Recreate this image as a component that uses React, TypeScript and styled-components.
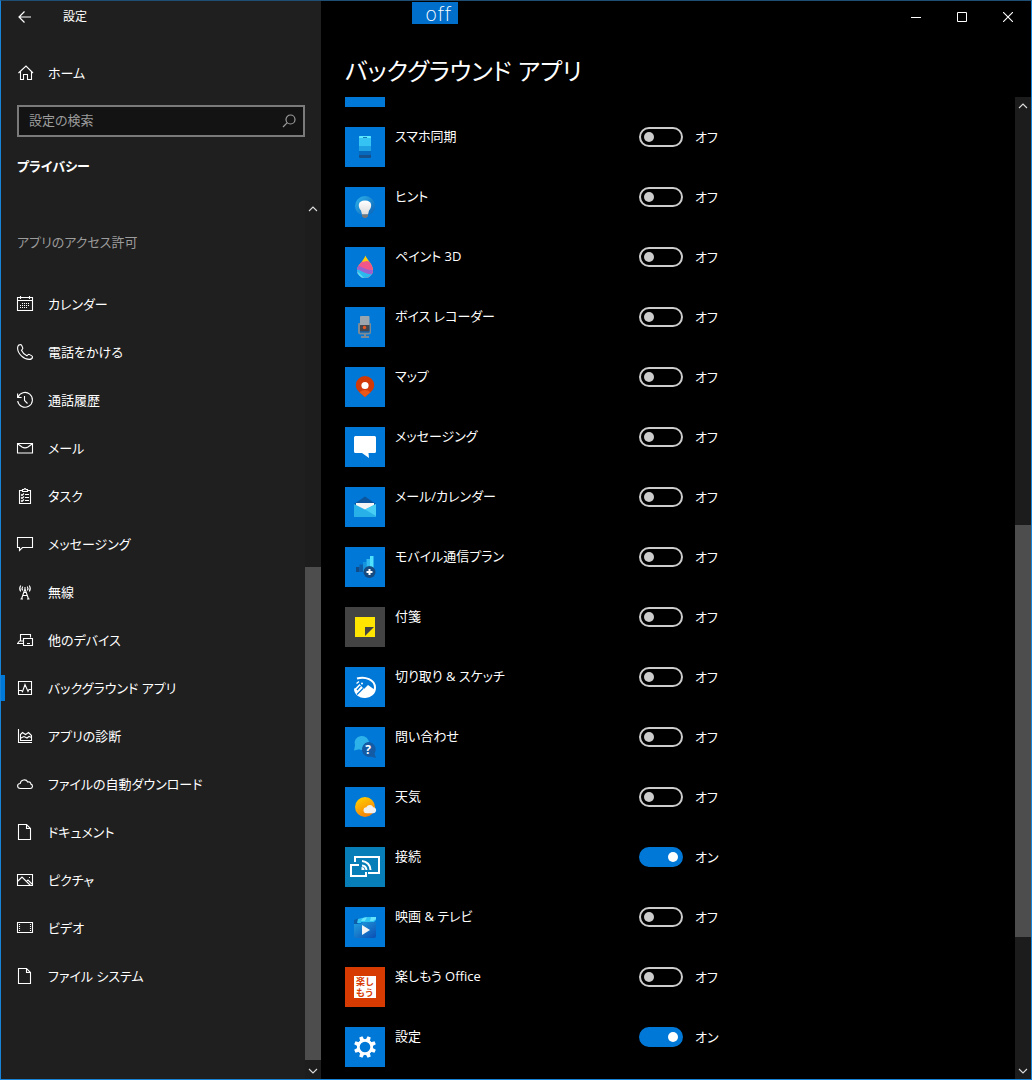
import React, { useState } from "react";
import styled, { createGlobalStyle } from "styled-components";

const GlobalStyle = createGlobalStyle`
  *, *::before, *::after { box-sizing: border-box; }
  html, body { margin: 0; background: #000; }
  body {
    color: #fff;
    font-family: "Open Sans", "Noto Sans CJK JP", sans-serif;
    font-size: 13px;
    line-height: 20px;
    font-feature-settings: "palt";
  }
  button, input { font: inherit; font-feature-settings: inherit; color: inherit; }
`;

/* ---------- window frame ---------- */

const Window = styled.div`
  position: relative;
  display: grid;
  grid-template-columns: 320px minmax(0, 1fr);
  height: 100vh;
  border: 1px solid #1883d7;
  border-top-color: #1f4e75;
  background: #000;
  overflow: hidden;
`;

const Badge = styled.output`
  position: absolute;
  top: 1px;
  left: 411px;
  width: 46px;
  height: 22px;
  padding-left: 13px;
  background: #006fcb;
  font-family: "DejaVu Sans", sans-serif;
  font-size: 20px;
  font-weight: 200;
  font-variant-ligatures: none;
  line-height: 24px;
`;

const Sidebar = styled.aside`
  display: flex;
  flex-direction: column;
  min-height: 0;
  background: #1f1f1f;
`;

const Main = styled.main`
  display: flex;
  flex-direction: column;
  min-width: 0;
  min-height: 0;
`;

const IconButton = styled.button<{ $width: number; $height: number }>`
  display: flex;
  align-items: center;
  justify-content: center;
  flex: none;
  width: ${(p) => p.$width}px;
  height: ${(p) => p.$height}px;
  padding: 0;
  border: 0;
  background: transparent;
`;

const TitleBar = styled.header`
  display: flex;
  align-items: center;
  height: 32px;
`;

const Caption = styled.span`
  padding-left: 14px;
  font-size: 12px;
`;

const WindowControls = styled.div`
  display: flex;
  justify-content: flex-end;
  height: 32px;
`;

/* ---------- sidebar ---------- */

const SideLink = styled.a<{ $current?: boolean }>`
  display: flex;
  align-items: center;
  gap: 15px;
  height: 48px;
  padding-left: 12px;
  border-left: 4px solid transparent;
  border-image: ${(p) =>
    p.$current ? "linear-gradient(transparent 25%, #0078d7 25%, #0078d7 75%, transparent 75%) 1" : "none"};
  border-width: 0 0 0 4px;
  color: #fff;
  text-decoration: none;
`;

const HomeArea = styled.div`
  padding-top: 16px;
`;

const SearchBox = styled.form`
  display: flex;
  align-items: center;
  height: 32px;
  margin: 8px 16px 0;
  border: 2px solid #7a7a7a;
  background: #131313;
  color: #9c9c9c;
`;

const SearchInput = styled.input`
  flex: 1;
  min-width: 0;
  height: 28px;
  padding: 0 0 2px 10px;
  border: 0;
  outline: 0;
  background: transparent;
  &::placeholder { color: #9c9c9c; opacity: 1; }
`;

const Section = styled.h2`
  margin: 19px 16px 24px;
  font-size: 13px;
  font-weight: 700;
  line-height: 20px;
`;

const SideScroll = styled.div`
  display: flex;
  flex: 1;
  min-height: 0;
`;

const NavArea = styled.nav`
  flex: 1;
  min-width: 0;
  overflow: hidden;
`;

const GroupTitle = styled.h3`
  margin: 32px 16px 28px;
  color: #9c9c9c;
  font-size: 13px;
  font-weight: 400;
  line-height: 20px;
`;

/* ---------- scroll bars ---------- */

const Bar = styled.div<{ $track: string }>`
  display: flex;
  flex-direction: column;
  flex: none;
  width: 16px;
  background: ${(p) => p.$track};
`;

const BarPart = styled.div<{ $grow: number; $thumb?: boolean }>`
  flex: ${(p) => p.$grow} 1 0;
  background: ${(p) => (p.$thumb ? "#4d4d4d" : "transparent")};
`;

function ScrollBar({ before, thumb, after, track }: { before: number; thumb: number; after: number; track: string }) {
  return (
    <Bar $track={track}>
      <IconButton type="button" $width={16} $height={17} aria-label="上へスクロール">
        <svg width="10" height="6" fill="none" stroke="#ddd" strokeWidth="1.1"><path d="M1 5 5 1 9 5" /></svg>
      </IconButton>
      <BarPart $grow={before} />
      <BarPart $grow={thumb} $thumb />
      <BarPart $grow={after} />
      <IconButton type="button" $width={16} $height={17} aria-label="下へスクロール">
        <svg width="10" height="6" fill="none" stroke="#ddd" strokeWidth="1.1"><path d="M1 1 5 5 9 1" /></svg>
      </IconButton>
    </Bar>
  );
}

/* ---------- content ---------- */

const Title = styled.h1`
  margin: 20px 24px 8px;
  font-size: 24px;
  font-weight: 400;
  line-height: 36px;
`;

const ContentScroll = styled.div`
  display: flex;
  flex: 1;
  min-height: 0;
`;

const AppList = styled.ul`
  display: flex;
  flex-direction: column;
  flex: 1;
  gap: 20px;
  min-width: 0;
  margin: 0;
  padding: 0 24px;
  overflow: hidden;
  list-style: none;
`;

const AppRow = styled.li`
  display: grid;
  grid-template-columns: 40px minmax(0, 234px) auto;
  flex: none;
  align-items: start;
  gap: 10px;
`;

const Tile = styled.div<{ $color?: string; $height?: number }>`
  display: flex;
  align-items: center;
  justify-content: center;
  height: ${(p) => p.$height ?? 40}px;
  background: ${(p) => p.$color ?? "#0078d7"};
`;

const WordMark = styled.div`
  width: 22px;
  height: 22px;
  padding: 0 2px;
  background: #fff;
  color: #d83b01;
  font-family: "Noto Sans CJK JP", sans-serif;
  font-feature-settings: normal;
  font-size: 9px;
  font-weight: 700;
  line-height: 11px;
  word-break: break-all;
`;

const AppName = styled.label`
  line-height: 18px;
  white-space: nowrap;
`;

const SwitchCell = styled.div`
  display: flex;
  align-items: center;
  gap: 12px;
  height: 20px;
`;

const Switch = styled.input`
  display: flex;
  align-items: center;
  appearance: none;
  width: 44px;
  height: 20px;
  margin: 0;
  padding: 0 3px;
  border: 2px solid #ccc;
  border-radius: 10px;
  &::before {
    content: "";
    width: 10px;
    height: 10px;
    border-radius: 50%;
    background: #ccc;
  }
  &:checked {
    justify-content: flex-end;
    border-color: #0078d7;
    background: #0078d7;
  }
  &:checked::before { background: #fff; }
`;

/* ---------- line icons, 16 x 16 ---------- */

const lineIcons: Record<string, React.ReactNode> = {
  home: <path d="M1.5 8 9 1l7 7M3.5 6.5v8h3v-5h4v5h4v-8" />,
  calendar: (
    <>
      <path d="M.5 1.5h15v13H.5zM.5 4.5h15M3.5 0v3M12.5 0v3" />
      <path d="M5 7.5h8M3 9.5h10M3 11.5h8" strokeDasharray="1 1" />
    </>
  ),
  phone: <path d="M3.3.6C1.7.7.6 2.2.6 4.2.6 9.6 6.8 15.4 12.2 15.4c1.9 0 3.2-1 3.3-2.3 0-.6-.2-.9-.7-1.2l-2.1-1.3c-.6-.4-1.2-.3-1.6.1l-1.2 1.1C7.9 10.9 5.4 8.5 4.5 6.3L5.5 5c.4-.5.4-1 .1-1.6L4.6 1.300C4.3.8 3.9.5 3.3.6z" />,
  history: <path d="M.6 1.5v4h4M1 5.5A7.400 7.400 0 1 1 .7 9M7.500 4v4.500l3 3" />,
  mail: <path d="M.5 3.500h15v9.500H.5zM1 4l4 3q3 1.800 6 0l4-3" />,
  task: (
    <>
      <path d="M5.500 2.500h-3v13h11v-13h-3M5.500 3.500v-2h1.500q1-2 2 0h1.500v2z" />
      <path d="M8 6.500h4M8 9.500h4M8 12.500h4M4 6.500l1 1 2-2M4 9.500l1 1 2-2M4 12.500l1 1 2-2" />
    </>
  ),
  message: <path d="M.5 1.500h15v10h-10l-3 3v-3h-2z" />,
  wireless: <path d="M4.500 15 8 5l3.500 10M5.500 11.500h5M3.500 15h2.500M10 15h2.500M6.500 8.500h3M3.700 1.500q-2 3 0 6M5.700 2.500q-1.300 2 0 4M12.300 1.500q2 3 0 6M10.300 2.500q1.300 2 0 4M8 3v3" />,
  devices: <path d="M3.500 9V2.500h10v3M6.500 6.500h9v7h-9zM10 11.500h3M0 11.500h6M.5 11.500 2.500 9H6" />,
  background: <path d="M1.500 1.500h13v13h-13zM2 10.500h2.500l1 1.200L8 4.500l3 7 1-2h2.500" />,
  diagnostics: <path d="M1.500 1v13.500H15M3.500 12.500v-6l2-2 3 2 3-2 3 3v5zM4 10l3-1.500 3 1.500 2-1.500 2.500 1" />,
  cloud: <path d="M3.500 12.500C-.3 12.500-.3 7.700 3.200 7.500 3.700 3.400 9.200 2.600 10.700 6c2-.6 3.100.5 3.200 2.100 2.400.7 2 4.400-.7 4.400z" />,
  document: <path d="M1.500.5h8l4 4v11h-12zM9.500.5v4h4" />,
  picture: <path d="M.5 2.500h15v11H.5zM1 9l4-4 8.500 8.500M9.500 9.500l1.500-1.500 4 4M12 5.500h1" />,
  video: (
    <>
      <path d="M.5 2.500h15v10H.5z" />
      <path d="M2.500 4v8M13.500 4v8" strokeDasharray="1 1" />
    </>
  ),
};

const LineIconSvg = styled.svg`
  flex: none;
  fill: none;
  stroke: #fff;
  stroke-width: 1.1;
`;

function LineIcon({ name }: { name: string }) {
  return (
    <LineIconSvg width="16" height="16" viewBox="0 0 16 16" aria-hidden="true" overflow="visible">
      {lineIcons[name]}
    </LineIconSvg>
  );
}

/* ---------- app icons, 40 x 40 ---------- */

const teeth = [0, 45, 90, 135, 180, 225, 270, 315];

const appIcons: Record<string, React.ReactNode> = {
  phone: (
    <>
      <path fill="#35c3f3" d="M14 10q0-1 1-1h10q1 0 1 1v9H14z" />
      <path fill="#5be7ff" d="M14 10q0-1 1-1h10q1 0 1 1v1H14z" />
      <path fill="#1579b5" d="M18 10h4v1h-4z" />
      <path fill="#1ea2e4" d="M14 19h12v5H14z" />
      <path fill="#0669bd" d="M14 24h12v4H14z" />
      <path fill="#15508c" d="M14 28h12v2q0 1-1 1H15q-1 0-1-1z" />
    </>
  ),
  tips: (
    <>
      <defs>
        <linearGradient id="tipDisc" x1="0" y1="0" x2="1" y2="1"><stop stopColor="#2fb4ec" /><stop offset="1" stopColor="#0a5fb5" /></linearGradient>
        <linearGradient id="tipBulb" x1="0" y1="0" x2="0" y2="1"><stop stopColor="#fff" /><stop offset="1" stopColor="#ddd" /></linearGradient>
      </defs>
      <circle cx="20" cy="19" r="10" fill="url(#tipDisc)" />
      <path fill="url(#tipBulb)" d="M20 13.500c8 0 7 7 4 10l-1 4h-6l-1-4c-3-3-4-10 4-10z" />
      <path fill="#777" d="M17 27.500h6v2l-2 1.500h-2l-2-1.500z" />
    </>
  ),
  paint: (
    <>
      <defs><clipPath id="drop"><path d="M20.500 8.500C22 13 28 17 28 23.500A8 7.500 0 0 1 12 23.500C12 18 18 15 20.500 8.500z" /></clipPath></defs>
      <g clipPath="url(#drop)">
        <path fill="#ffcb0c" d="M10 8h20v24H10z" />
        <path fill="#f0568a" d="M10 16c5-3 7 0 12-2l8 2v16H10z" />
        <path fill="#9a62d0" d="M10 19c6-2 9 5 20 4v9H10z" />
        <path fill="#2cb9ee" d="M10 22.500c6-1 8 5 18 4.500v6H10z" />
        <path fill="#55dcf7" d="M10 25c5-1 6 4 11 7H10z" />
      </g>
    </>
  ),
  recorder: (
    <>
      <path fill="#9aa5ae" d="M15 10q0-1 1-1h7.500q1 0 1 1v8H15z" />
      <path fill="#7c8a95" d="M13 17q0-1 1-1h1v9.500h9.500V16h.5q1 0 1 1v8q0 2.500-2.500 2.500h-8Q13 27.500 13 25zM19 27h2v2h3v2h-8v-2h3z" />
      <path fill="#41464c" d="M15 18h9.500v6H15z" />
      <path fill="#1c5d99" d="M15 24h9.500v1.500H15z" />
      <circle cx="19.500" cy="20.500" r="1.700" fill="#e8551f" />
    </>
  ),
  maps: (
    <>
      <path fill="#d13a08" d="M20 9a9.200 9.200 0 0 1 9.200 9.200c0 5-4.200 7.300-9.200 11.800-5-4.500-9.200-6.800-9.200-11.800A9.200 9.200 0 0 1 20 9z" />
      <path fill="#e9571a" d="M14.500 25.300Q20 20.500 25.500 25.300L20 30z" />
      <circle cx="20" cy="18.500" r="3.600" fill="#fff" />
    </>
  ),
  messaging: <path fill="#fff" d="M10.500 9h19Q31 9 31 10.500v14q0 1.500-1.500 1.500h-6l.5 5-7-5h-6.500Q9 26 9 24.500v-14Q9 9 10.500 9z" />,
  mail: (
    <>
      <path fill="#0b559f" d="M9 17 20 9.500 31 17v5H9z" />
      <path fill="#f4f4f4" d="M11 16h18v5l-9 4-9-4z" />
      <path fill="#28b0e8" d="M9 17l11 5.500L31 17v13H9z" />
      <path fill="#48cdf5" d="M31 17v12L20 22.500z" />
    </>
  ),
  mobile: (
    <>
      <path fill="#104b88" d="M11 20h3.500v5H11z" />
      <path fill="#0c5ca8" d="M14.500 17.500H18V25h-3.500z" />
      <path fill="#1593dc" d="M18 15h3.500v10H18z" />
      <path fill="#30b9ef" d="M21.500 12H25v13h-3.500z" />
      <path fill="#50e2fc" d="M25 9h3.500v13H25z" />
      <circle cx="24.500" cy="25" r="6" fill="#174b80" />
      <path fill="#fff" d="M23.500 22h2v2h2v2h-2v2h-2v-2h-2v-2h2z" />
    </>
  ),
  notes: (
    <>
      <path fill="#ffe500" d="M10 10h20v20H10z" />
      <path fill="#434343" d="M20 20h9l-9 9z" />
    </>
  ),
  snip: (
    <>
      <path fill="none" stroke="#fff" strokeWidth="2" d="M12 11.500C20 9 30 12.500 30 20.500 30 33 10 33 10 21.500" />
      <path fill="#fff" d="M9.500 22l5-5 2.500 3 2 2 4-4 7 5Q27 30.500 20 30.500T9.500 22z" />
      <path stroke="#0078d7" strokeWidth="1.200" d="M12 27.500l6-6M15.500 19l-3.500 4" />
      <circle cx="17" cy="16.500" r="1" fill="#fff" />
      <path stroke="#fff" strokeWidth="1.500" d="M11.500 16.500l2.500-2" />
    </>
  ),
  help: (
    <>
      <path fill="#2eb2ea" d="M16 9a7 7 0 1 1-2 13.300L9 23.500l1-5A7 7 0 0 1 16 9z" />
      <path fill="#135ca5" d="M23 15a7.500 7.500 0 0 1 6.500 11.500L31 31l-5-1.200A7.500 7.500 0 1 1 23 15z" />
      <text x="23" y="27" fill="#fff" fontSize="12" fontWeight="700" textAnchor="middle">?</text>
    </>
  ),
  weather: (
    <>
      <defs><linearGradient id="sun" x1=".2" y1="0" x2=".7" y2="1"><stop stopColor="#ffd000" /><stop offset="1" stopColor="#f57c0c" /></linearGradient></defs>
      <circle cx="20" cy="20" r="10" fill="url(#sun)" />
      <path fill="#f0f0f0" d="M21.500 26.200a3 3 0 0 1 0-6c1-3 6-3 6.500 0 4-.5 4.500 6 0 6z" />
    </>
  ),
  connect: (
    <g fill="none" stroke="#fff" strokeWidth="2">
      <path d="M10 15v-5h24v16H23M14 18H6v11h15v-4" />
      <path d="M17 14a9 9 0 0 1 8.500 9M17 18.500a5 5 0 0 1 4.500 4.500" />
      <path fill="#fff" stroke="none" d="M16.500 20a3 3 0 0 1 3 3h-3z" />
    </g>
  ),
  movies: (
    <>
      <defs><linearGradient id="film" x1="0" y1="0" x2="1" y2="1"><stop stopColor="#23a0df" /><stop offset="1" stopColor="#0a4eb4" /></linearGradient></defs>
      <path fill="#0e5da9" d="M9 13l4-1.500v6H9z" />
      <path fill="#30c5f3" d="M13 12l4-1-1 5h-4zM17 11l6-1-1 5h-6zM23 10h8v3l-2 2h-7z" />
      <path fill="#67e3fc" d="M18 11l4-1-2 4h-4zM26 10h5v2l-3 2h-3z" />
      <path fill="url(#film)" d="M9 17h7l2-2h13v14q0 2-2 2H11q-2 0-2-2z" />
      <path fill="#f4f4f4" d="M17 18l8 5-8 5z" />
    </>
  ),
  settings: (
    <>
      {teeth.map((angle) => (
        <path key={angle} fill="#fff" d="M17.800 13.500 18.300 9h3.400l.5 4.500z" transform={`rotate(${angle + 22.5} 20 20)`} />
      ))}
      <circle cx="20" cy="20" r="6.700" fill="none" stroke="#fff" strokeWidth="2.800" />
    </>
  ),
};

/* ---------- data ---------- */

const navItems = [
  ["calendar", "カレンダー"],
  ["phone", "電話をかける"],
  ["history", "通話履歴"],
  ["mail", "メール"],
  ["task", "タスク"],
  ["message", "メッセージング"],
  ["wireless", "無線"],
  ["devices", "他のデバイス"],
  ["background", "バックグラウンド アプリ"],
  ["diagnostics", "アプリの診断"],
  ["cloud", "ファイルの自動ダウンロード"],
  ["document", "ドキュメント"],
  ["picture", "ピクチャ"],
  ["video", "ビデオ"],
  ["document", "ファイル システム"],
];

type AppEntry = { icon: string; name: string; color?: string; on?: boolean };

const apps: AppEntry[] = [
  { icon: "phone", name: "スマホ同期" },
  { icon: "tips", name: "ヒント" },
  { icon: "paint", name: "ペイント 3D" },
  { icon: "recorder", name: "ボイス レコーダー" },
  { icon: "maps", name: "マップ" },
  { icon: "messaging", name: "メッセージング" },
  { icon: "mail", name: "メール/カレンダー" },
  { icon: "mobile", name: "モバイル通信プラン" },
  { icon: "notes", name: "付箋", color: "#434343" },
  { icon: "snip", name: "切り取り & スケッチ" },
  { icon: "help", name: "問い合わせ" },
  { icon: "weather", name: "天気" },
  { icon: "connect", name: "接続", color: "#087eb8", on: true },
  { icon: "movies", name: "映画 & テレビ" },
  { icon: "office", name: "楽しもう Office", color: "#d83b01" },
  { icon: "settings", name: "設定", on: true },
];

function AppItem({ app }: { app: AppEntry }) {
  const [on, setOn] = useState(Boolean(app.on));
  const id = `app-${app.icon}`;
  return (
    <AppRow>
      <Tile $color={app.color}>
        {app.icon === "office" ? (
          <WordMark>楽しもう</WordMark>
        ) : (
          <svg width="40" height="40" viewBox="0 0 40 40" aria-hidden="true">{appIcons[app.icon]}</svg>
        )}
      </Tile>
      <AppName htmlFor={id}>{app.name}</AppName>
      <SwitchCell>
        <Switch id={id} type="checkbox" role="switch" checked={on} onChange={(e) => setOn(e.target.checked)} />
        <span>{on ? "オン" : "オフ"}</span>
      </SwitchCell>
    </AppRow>
  );
}

export default function App() {
  return (
    <>
      <GlobalStyle />
      <Window>
        <Sidebar>
          <TitleBar>
            <IconButton type="button" $width={48} $height={32} aria-label="戻る">
              <svg width="14" height="12" fill="none" stroke="#fff" strokeWidth="1.2"><path d="M13 6H1M6.500.5 1 6l5.500 5.500" /></svg>
            </IconButton>
            <Caption>設定</Caption>
          </TitleBar>
          <HomeArea>
            <SideLink href="#home"><LineIcon name="home" />ホーム</SideLink>
          </HomeArea>
          <SearchBox role="search">
            <SearchInput type="text" placeholder="設定の検索" aria-label="設定の検索" />
            <IconButton type="button" $width={28} $height={28} aria-label="検索">
              <svg width="14" height="14" fill="none" stroke="#9c9c9c" strokeWidth="1.200"><circle cx="8.500" cy="5.500" r="4.500" /><path d="M5.300 8.700 1 13" /></svg>
            </IconButton>
          </SearchBox>
          <Section>プライバシー</Section>
          <SideScroll>
            <NavArea>
              <GroupTitle>アプリのアクセス許可</GroupTitle>
              {navItems.map(([icon, label]) => (
                <SideLink key={label} href={`#${label}`} $current={icon === "background"}>
                  <LineIcon name={icon} />
                  {label}
                </SideLink>
              ))}
            </NavArea>
            <ScrollBar before={350} thumb={493} after={2} track="#1d1d1d" />
          </SideScroll>
        </Sidebar>
        <Main>
          <WindowControls>
            <IconButton type="button" $width={46} $height={32} aria-label="最小化">
              <svg width="10" height="10" stroke="#fff"><path d="M0 5.500h10" /></svg>
            </IconButton>
            <IconButton type="button" $width={46} $height={32} aria-label="最大化">
              <svg width="10" height="10" fill="none" stroke="#fff"><path d="M.5.5h9v9h-9z" /></svg>
            </IconButton>
            <IconButton type="button" $width={46} $height={32} aria-label="閉じる">
              <svg width="10" height="10" stroke="#fff" strokeWidth="1.100"><path d="M0 0l10 10M10 0 0 10" /></svg>
            </IconButton>
          </WindowControls>
          <Title>バックグラウンド アプリ</Title>
          <ContentScroll>
            <AppList>
              <AppRow><Tile $height={10} /></AppRow>
              {apps.map((app) => <AppItem key={app.icon} app={app} />)}
            </AppList>
            <ScrollBar before={411} thumb={412} after={125} track="#1c1c1c" />
          </ContentScroll>
        </Main>
        <Badge>off</Badge>
      </Window>
    </>
  );
}
